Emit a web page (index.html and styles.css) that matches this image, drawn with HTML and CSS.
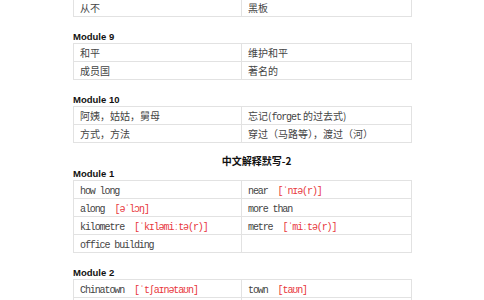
FILE: index.html
```html
<!DOCTYPE html>
<html>
<head>
<meta charset="utf-8">
<link rel="stylesheet" href="styles.css">
</head>
<body>
<div class="page">
  <table class="grid first">
    <colgroup><col class="c1"><col class="c2"></colgroup>
    <tr><td>从不</td><td>黑板</td></tr>
  </table>

  <h3 class="module">Module 9</h3>
  <table class="grid">
    <colgroup><col class="c1"><col class="c2"></colgroup>
    <tr><td>和平</td><td>维护和平</td></tr>
    <tr><td>成员国</td><td>著名的</td></tr>
  </table>

  <h3 class="module">Module 10</h3>
  <table class="grid">
    <colgroup><col class="c1"><col class="c2"></colgroup>
    <tr><td>阿姨，姑姑，舅母</td><td>忘记(<span class="en">forget</span> 的过去式)</td></tr>
    <tr><td>方式，方法</td><td>穿过（马路等），渡过（河）</td></tr>
  </table>

  <h2 class="title">中文解释默写-2</h2>
  <h3 class="module tight">Module 1</h3>
  <table class="grid">
    <colgroup><col class="c1"><col class="c2"></colgroup>
    <tr><td><span class="en">how long</span></td><td><span class="en">near</span><span class="ph">[ˈnɪə(r)]</span></td></tr>
    <tr><td><span class="en">along</span><span class="ph">[əˈlɔŋ]</span></td><td><span class="en">more than</span></td></tr>
    <tr><td><span class="en">kilometre</span><span class="ph">[ˈkɪləmiːtə(r)]</span></td><td><span class="en">metre</span><span class="ph">[ˈmiːtə(r)]</span></td></tr>
    <tr><td><span class="en">office building</span></td><td></td></tr>
  </table>

  <h3 class="module">Module 2</h3>
  <table class="grid">
    <colgroup><col class="c1"><col class="c2"></colgroup>
    <tr><td><span class="en">Chinatown</span><span class="ph">[ˈtʃaɪnətaʊn]</span></td><td><span class="en">town</span><span class="ph">[taʊn]</span></td></tr>
    <tr><td>&nbsp;</td><td>&nbsp;</td></tr>
  </table>
</div>
</body>
</html>
```

FILE: styles.css
```css
html, body {
  margin: 0;
  padding: 0;
  background: #ffffff;
}

body {
  font-family: "Noto Sans CJK SC", sans-serif;
  color: #444444;
}

.page {
  width: 338px;
  margin-left: 73px;
  margin-top: -2px;
}

.grid {
  width: 338px;
  border-collapse: collapse;
  table-layout: fixed;
}

.c1 { width: 168px; }
.c2 { width: 170px; }

.grid td {
  height: 17px;
  padding: 0 0 0 6px;
  border: 1px solid #e2e2e2;
  font-size: 10px;
  line-height: 17px;
  white-space: nowrap;
  overflow: hidden;
  vertical-align: middle;
}

.grid td + td {
  padding-left: 6px;
}

.en {
  font-family: "Liberation Mono", monospace;
  font-size: 10px;
  line-height: 10px;
  letter-spacing: -1.1px;
}

.ph {
  font-family: "Liberation Mono", "DejaVu Sans Mono", monospace;
  font-size: 10px;
  line-height: 10px;
  letter-spacing: -1.1px;
  color: #e8383d;
  margin-left: 10px;
}

.module {
  margin: 14px 0 0 0;
  font-family: "Liberation Sans", sans-serif;
  font-weight: bold;
  font-size: 9.5px;
  line-height: 12px;
  color: #111;
}

.module.tight {
  margin-top: 1px;
}

.title {
  margin: 12px 0 0 0;
  padding-left: 29px;
  text-align: center;
  font-family: "Noto Sans CJK SC", sans-serif;
  font-weight: bold;
  font-size: 10px;
  line-height: 12px;
  color: #111;
}
```
